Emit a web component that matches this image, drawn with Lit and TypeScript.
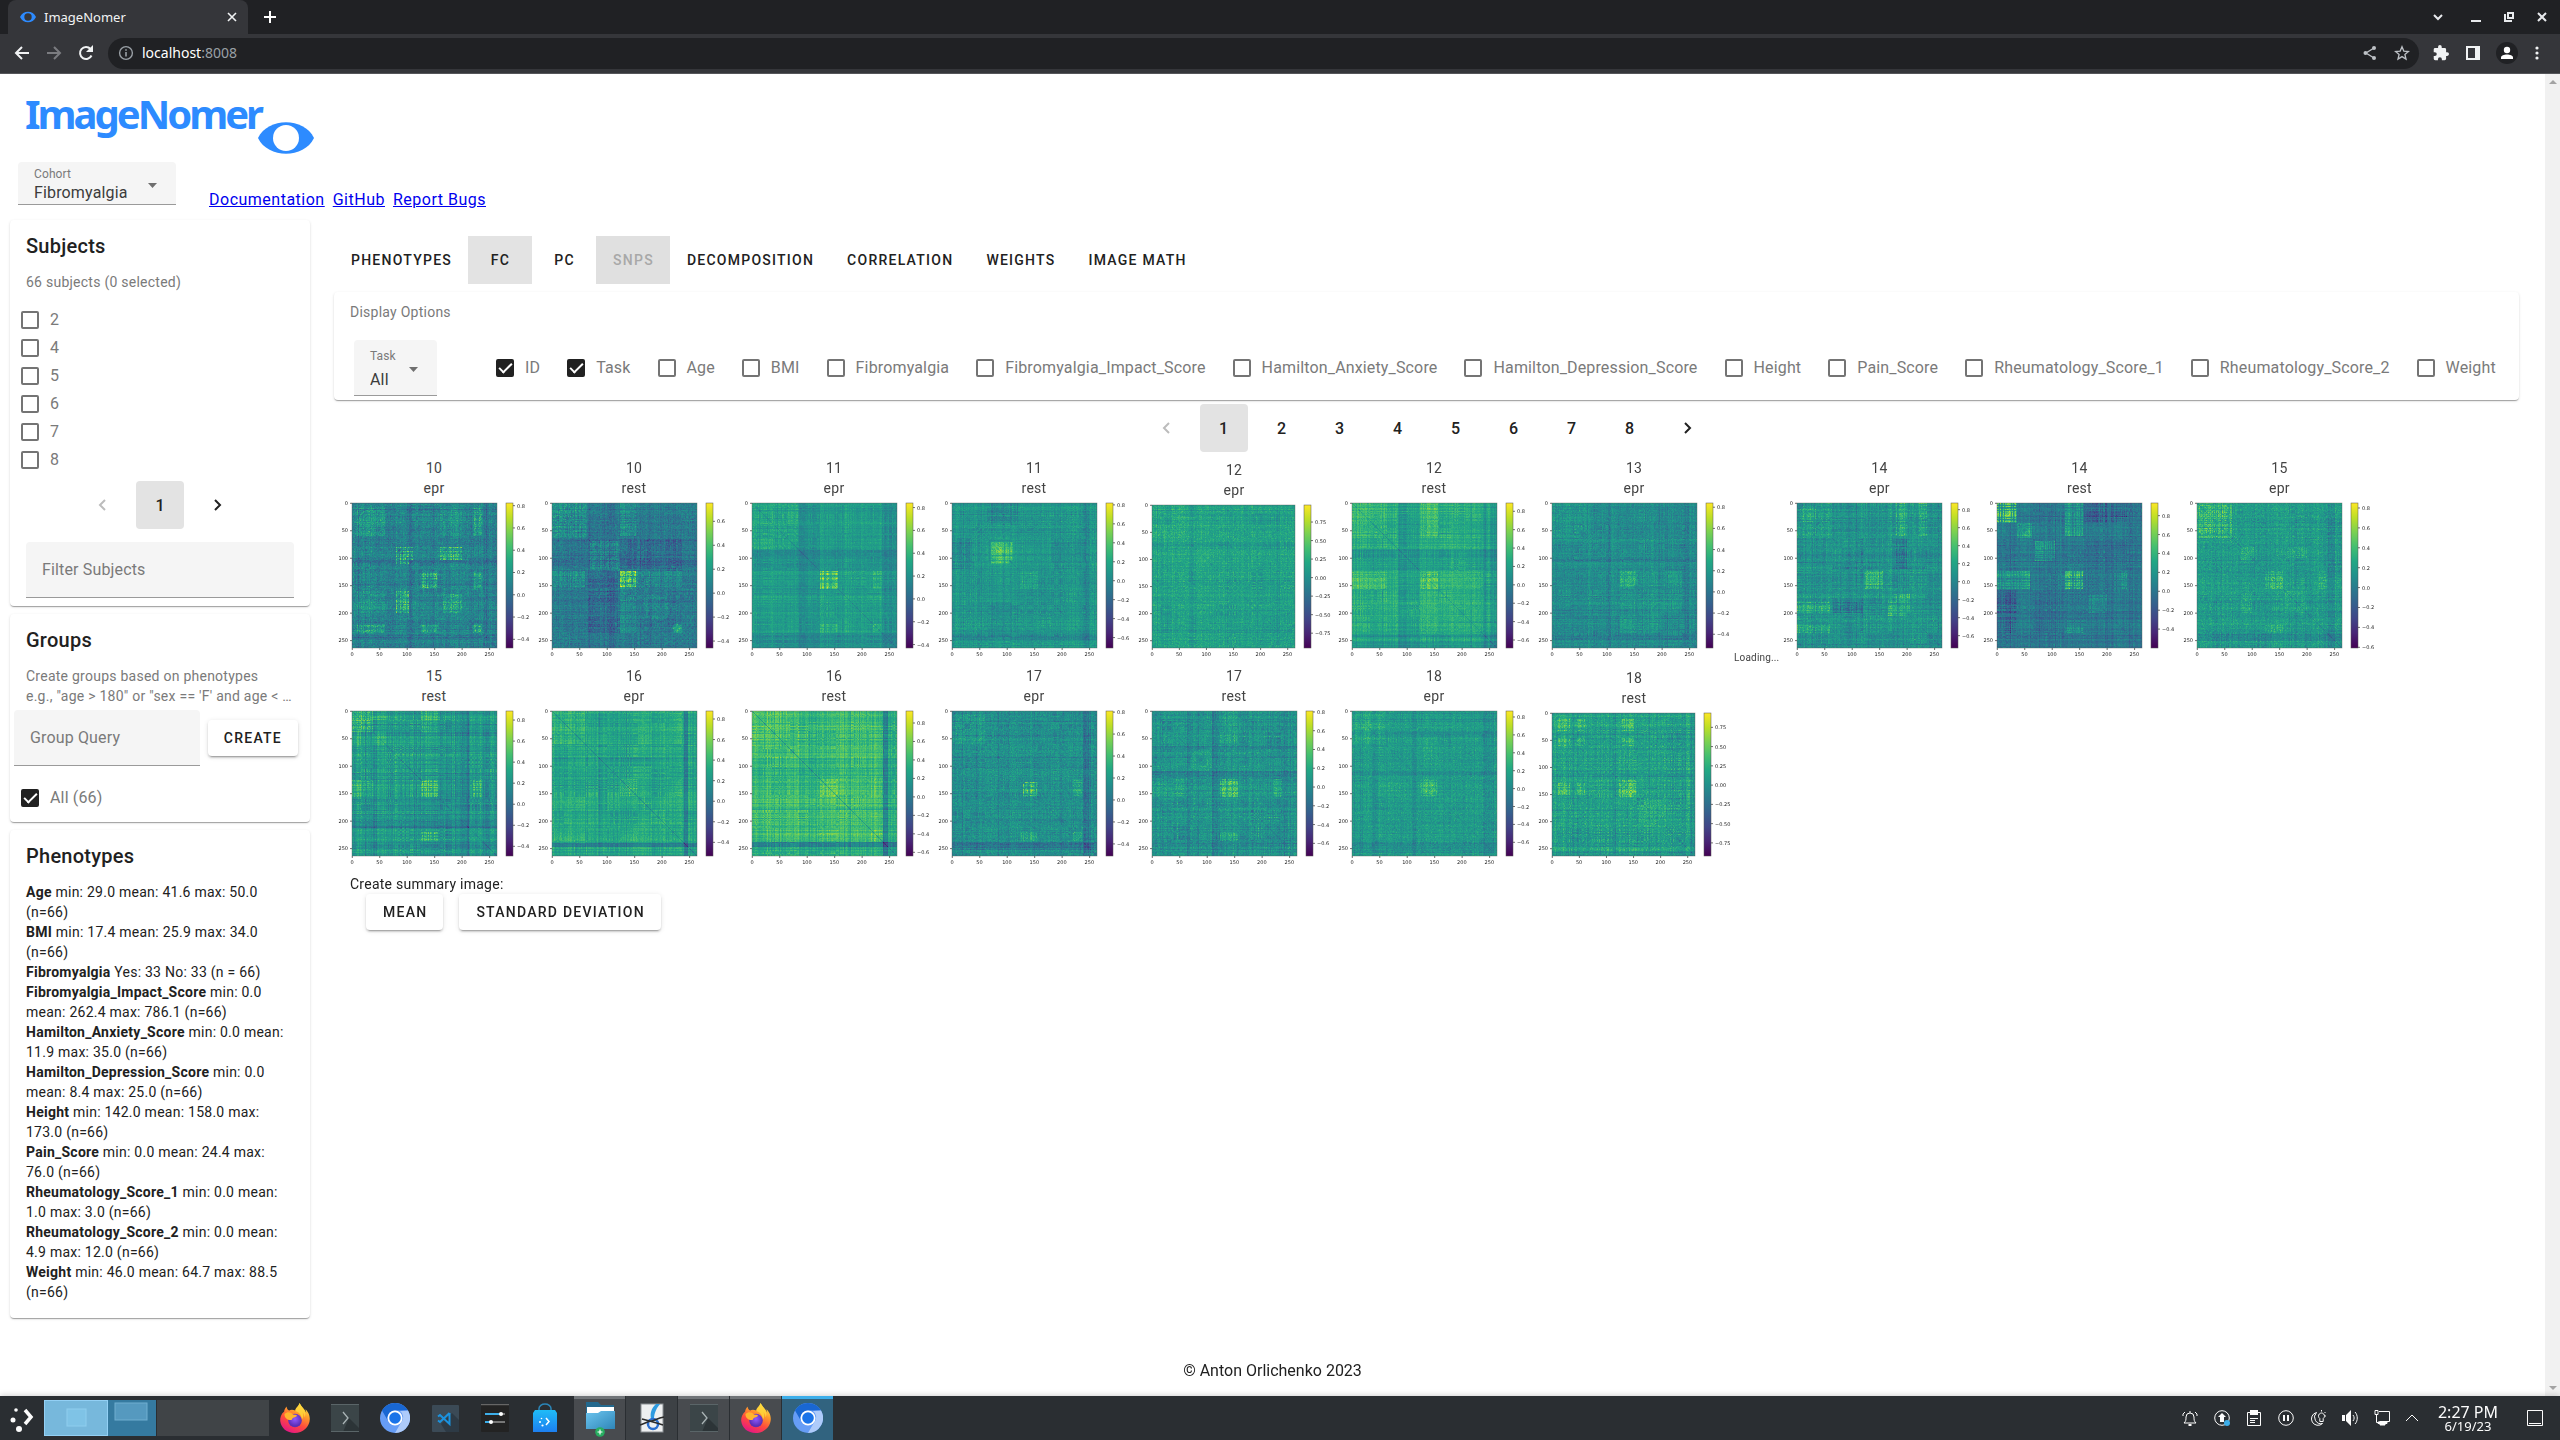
import { LitElement, html, svg, css, nothing } from "lit";
import { customElement, property, query } from "lit/decorators.js";
import { classMap } from "lit/directives/class-map.js";

/* ---------- shared styles ---------- */

const base = css`
  :host {
    display: block;
    box-sizing: border-box;
  }
  *,
  *::before,
  *::after {
    box-sizing: border-box;
  }
  button,
  input,
  select {
    font: inherit;
    letter-spacing: inherit;
    color: inherit;
    margin: 0;
    padding: 0;
    border: 0;
    background: none;
    appearance: none;
  }
  svg {
    display: block;
    flex: none;
  }
`;

const material = css`
  .card {
    background: #fff;
    border-radius: 4px;
    box-shadow: 0 2px 1px -1px rgba(0, 0, 0, 0.2), 0 1px 1px 0 rgba(0, 0, 0, 0.14),
      0 1px 3px 0 rgba(0, 0, 0, 0.12);
  }
  .title {
    margin: 0;
    padding: 10px 16px;
    font-size: 20px;
    line-height: 32px;
    font-weight: 500;
    letter-spacing: 0.0125em;
  }
  .subtitle {
    margin: 0;
    font-size: 14px;
    line-height: 20px;
    letter-spacing: 0.0178em;
    color: #7a7a7a;
  }
  .check {
    display: flex;
    align-items: center;
    gap: 11px;
    font-size: 16px;
    line-height: 28px;
    letter-spacing: 0.0094em;
    color: #7a7a7a;
    white-space: nowrap;
  }
  .check input {
    flex: none;
    display: grid;
    place-items: center;
    width: 18px;
    height: 18px;
    border: 2px solid #747474;
    border-radius: 2px;
  }
  .check input:checked {
    background: #212121;
    border-color: #212121;
  }
  .check input:checked::after {
    content: "";
    width: 13px;
    height: 7px;
    margin-top: -4px;
    border: solid #fff;
    border-width: 0 0 2px 2px;
    transform: rotate(-45deg);
  }
  .btn {
    height: 36px;
    padding: 0 16px;
    border-radius: 4px;
    background: #fff;
    font-size: 14px;
    font-weight: 500;
    letter-spacing: 0.0893em;
    color: #212121;
    box-shadow: 0 3px 1px -2px rgba(0, 0, 0, 0.2), 0 2px 2px 0 rgba(0, 0, 0, 0.14),
      0 1px 5px 0 rgba(0, 0, 0, 0.12);
  }
  .field {
    flex: none;
    display: grid;
    grid-template-columns: 1fr auto;
    padding: 8px 19px 0 16px;
    background: #f5f5f5;
    border-bottom: 1px solid #9a9a9a;
    border-radius: 4px 4px 0 0;
    height: 56px;
    width: 83px;
  }
  .field .cap {
    font-size: 12px;
    line-height: 16px;
    letter-spacing: 0.0094em;
    color: #7a7a7a;
  }
  .field select {
    grid-row: 2;
    font-size: 16px;
    height: 26px;
    line-height: 26px;
    letter-spacing: 0.0094em;
    color: #3c3c3c;
  }
  .field svg {
    grid-area: 1 / 2 / 3 / 3;
    align-self: center;
    margin-bottom: 4px;
  }
  .field.compact {
    padding-top: 4px;
    height: 43px;
    width: 158px;
  }
  .field.compact select {
    height: 20px;
    line-height: 20px;
  }
  .field.compact svg {
    margin-bottom: 0;
  }
  .text {
    display: block;
    height: 56px;
    padding: 0 16px;
    background: #f5f5f5;
    border-bottom: 1px solid #9a9a9a;
    border-radius: 4px 4px 0 0;
    font-size: 16px;
    letter-spacing: 0.0094em;
  }
  .text::placeholder {
    color: #7a7a7a;
    opacity: 1;
  }
`;

const caret = svg`<svg width="9" height="5" viewBox="0 0 9 5"><path d="M0 0h9L4.500 5z" fill="#6f6f6f"/></svg>`;

/* ---------- browser window frame ---------- */

@customElement("browser-bar")
class BrowserBar extends LitElement {
  static styles = [
    base,
    css`
      :host {
        font-family: "Noto Sans", sans-serif;
        color: #fff;
        background: #202124;
      }
      .strip {
        display: flex;
        align-items: center;
        height: 34px;
        padding: 0 10px 0 8px;
      }
      .tab {
        display: flex;
        align-items: center;
        align-self: stretch;
        width: 240px;
        padding: 0 8px 0 12px;
        gap: 8px;
        border-radius: 8px 8px 0 0;
        background: #35363a;
        font-size: 13px;
        color: #f1f3f4;
      }
      .name {
        flex: 1;
      }
      .icon {
        display: grid;
        place-items: center;
        width: 16px;
        height: 16px;
      }
      .add {
        margin-left: 14px;
      }
      .window {
        display: flex;
        margin-left: auto;
        gap: 17px;
      }
      .first {
        margin-right: 5px;
      }
      .tools {
        display: flex;
        align-items: center;
        height: 40px;
        padding: 0 14px 1px 13px;
        background: #35363a;
        border-bottom: 1px solid #55565a;
      }
      .nav {
        display: flex;
        gap: 14px;
        margin-right: 13px;
      }
      .nav .icon,
      .right .icon {
        width: 18px;
        height: 22px;
      }
      .address {
        flex: 1;
        display: flex;
        align-items: center;
        height: 31px;
        padding: 0 9px 0 10px;
        border-radius: 16px;
        background: #202124;
        gap: 8px;
      }
      .url {
        flex: 1;
        font-size: 14px;
        line-height: 20px;
        color: #fff;
      }
      .port {
        color: #9aa0a6;
      }
      .address .icon {
        width: 16px;
      }
      .star {
        margin-left: 8px;
      }
      .right {
        display: flex;
        gap: 14px;
        margin-left: 13px;
      }
    `,
  ];
  render() {
    return html`
      <div class="strip">
        <div class="tab">
          <svg width="16" height="16" viewBox="0 0 56 56">
            <path d="M0 28C10 3 46 3 56 28C46 53 10 53 0 28z" fill="#2d8bff" />
            <circle cx="28" cy="28" r="13" fill="#35363a" />
          </svg>
          <span class="name">ImageNomer</span>
          <button class="icon" aria-label="Close tab">
            <svg width="10" height="10"><path d="M1 1l8 8M9 1l-8 8" stroke="#f1f3f4" stroke-width="1.600" /></svg>
          </button>
        </div>
        <button class="icon add" aria-label="New tab">
          <svg width="12" height="12"><path d="M6 0v12M0 6h12" stroke="#fff" stroke-width="2" /></svg>
        </button>
        <div class="window">
          <button class="icon first" aria-label="Search tabs">
            <svg width="10" height="7"><path d="M1 1l4 4 4-4" fill="none" stroke="#e8eaed" stroke-width="2" /></svg>
          </button>
          <button class="icon" aria-label="Minimize">
            <svg width="10" height="10"><path d="M0 9h10" stroke="#e8eaed" stroke-width="2" /></svg>
          </button>
          <button class="icon" aria-label="Restore">
            <svg width="10" height="10">
              <path d="M4 1h5v5h-5zM1 2v7h7" fill="none" stroke="#e8eaed" stroke-width="2" />
            </svg>
          </button>
          <button class="icon" aria-label="Close window">
            <svg width="10" height="10"><path d="M1 1l8 8M9 1l-8 8" stroke="#e8eaed" stroke-width="2" /></svg>
          </button>
        </div>
      </div>
      <div class="tools">
        <div class="nav">
          <button class="icon" aria-label="Back">
            <svg width="16" height="14"><path d="M15 7H2M8 1L2 7l6 6" fill="none" stroke="#f1f3f4" stroke-width="2" /></svg>
          </button>
          <button class="icon" aria-label="Forward">
            <svg width="16" height="14"><path d="M1 7h13M8 1l6 6-6 6" fill="none" stroke="#7b7c80" stroke-width="2" /></svg>
          </button>
          <button class="icon" aria-label="Reload">
            <svg width="16" height="16">
              <path d="M13.500 10.500A6 6 0 1 1 12.500 4" fill="none" stroke="#f1f3f4" stroke-width="2" />
              <path d="M15 0v7H8z" fill="#f1f3f4" />
            </svg>
          </button>
        </div>
        <div class="address">
          <svg width="16" height="16">
            <circle cx="8" cy="8" r="6.400" fill="none" stroke="#9aa0a6" stroke-width="1.400" />
            <path d="M8 7v4.500M8 4.300v1.500" stroke="#9aa0a6" stroke-width="1.600" />
          </svg>
          <span class="url">localhost<span class="port">:8008</span></span>
          <button class="icon" aria-label="Share">
            <svg width="14" height="14">
              <path d="M11 2L3 7l8 5" fill="none" stroke="#bdc1c6" stroke-width="1.400" />
              <circle cx="11" cy="2" r="2" fill="#bdc1c6" /><circle cx="2.500" cy="7" r="2" fill="#bdc1c6" /><circle cx="11" cy="12" r="2" fill="#bdc1c6" />
            </svg>
          </button>
          <button class="icon star" aria-label="Bookmark">
            <svg width="16" height="16">
              <path d="M8 1.800l1.800 4.300 4.600.400-3.500 3 1.100 4.600L8 11.600 4 14.100l1.100-4.600-3.500-3 4.600-.400z" fill="none" stroke="#bdc1c6" stroke-width="1.300" />
            </svg>
          </button>
        </div>
        <div class="right">
          <button class="icon" aria-label="Extensions">
            <svg width="16" height="16" viewBox="1 1 22 22">
              <path fill="#f1f3f4" d="M20.500 11H19V7a2 2 0 0 0-2-2h-4V3.500a2.500 2.500 0 0 0-5 0V5H4a2 2 0 0 0-2 2v3.800h1.500a2.700 2.700 0 0 1 0 5.400H2V20a2 2 0 0 0 2 2h3.800v-1.500a2.700 2.700 0 0 1 5.400 0V22H17a2 2 0 0 0 2-2v-4h1.500a2.500 2.500 0 0 0 0-5z" />
            </svg>
          </button>
          <button class="icon" aria-label="Side panel">
            <svg width="14" height="14"><path fill="#f1f3f4" fill-rule="evenodd" d="M0 0h14v14H0zM2 2v10h7V2z" /></svg>
          </button>
          <button class="icon" aria-label="Profile">
            <svg width="22" height="22">
              <circle cx="11" cy="11" r="11" fill="#202124" />
              <circle cx="11" cy="8" r="3.200" fill="#fff" /><path d="M5 17v-1.500c0-4 12-4 12 0V17z" fill="#fff" />
            </svg>
          </button>
          <button class="icon" aria-label="Menu">
            <svg width="4" height="14"><circle cx="2" cy="2" r="1.600" fill="#f1f3f4" /><circle cx="2" cy="7" r="1.600" fill="#f1f3f4" /><circle cx="2" cy="12" r="1.600" fill="#f1f3f4" /></svg>
          </button>
        </div>
      </div>
    `;
  }
}

/* ---------- pagination ---------- */

@customElement("page-nav")
class PageNav extends LitElement {
  @property({ type: Number }) pages = 1;
  static styles = [
    base,
    css`
      nav {
        display: flex;
        justify-content: center;
        gap: 10px;
      }
      button {
        display: grid;
        place-items: center;
        width: 48px;
        height: 48px;
        border-radius: 4px;
        font-size: 16px;
        font-weight: 500;
        color: #212121;
      }
      .current {
        background: #e3e3e3;
      }
      button:disabled {
        color: #bcbcbc;
      }
    `,
  ];
  render() {
    const nums = Array.from({ length: this.pages }, (_, i) => i + 1);
    const arrow = (d: string) =>
      html`<svg width="8" height="12"><path d=${d} fill="none" stroke="currentColor" stroke-width="2" /></svg>`;
    return html`<nav aria-label="Pagination">
      <button disabled aria-label="Previous">${arrow("M7 1L2 6l5 5")}</button>
      ${nums.map((n) => html`<button class=${classMap({ current: n === 1 })}>${n}</button>`)}
      <button aria-label="Next">${arrow("M1 1l5 5-5 5")}</button>
    </nav>`;
  }
}

/* ---------- connectivity matrix plot ---------- */

interface Plot {
  id: number;
  task: string;
  min: number;
  max: number;
  step?: number;
  level: number;
  stripe: number;
  noise: number;
  bands?: number[][];
  blocks?: number[][];
  diag?: number;
}

const VIRIDIS = [
  [68, 1, 84], [72, 36, 117], [65, 68, 135], [53, 95, 141], [42, 120, 142], [33, 145, 140],
  [34, 168, 132], [68, 191, 112], [122, 209, 81], [189, 223, 38], [253, 231, 37],
];

function viridis(t: number): number[] {
  const x = Math.max(0, Math.min(0.9999, t)) * 10;
  const k = Math.floor(x);
  return VIRIDIS[k].map((c, n) => c + (VIRIDIS[k + 1][n] - c) * (x - k));
}

function random(seed: number) {
  let a = seed * 7919 + 17;
  return () => {
    a = (a + 0x6d2b79f5) | 0;
    let t = Math.imul(a ^ (a >>> 15), 1 | a);
    t = (t + Math.imul(t ^ (t >>> 7), 61 | t)) ^ t;
    return ((t ^ (t >>> 14)) >>> 0) / 4294967296;
  };
}

const NODES = 264;
const MODULES = [20, 36, 62, 82, 104, 122, 156, 180, 204, 236, 264];

@customElement("fc-plot")
class FcPlot extends LitElement {
  @property({ attribute: false }) plot!: Plot;
  @query("canvas") canvas!: HTMLCanvasElement;

  static styles = [
    base,
    css`
      :host {
        width: 200px;
        font-family: Roboto, sans-serif;
      }
      figure {
        margin: 0;
      }
      figcaption {
        font-size: 14px;
        line-height: 20px;
        letter-spacing: 0.0178em;
        text-align: center;
        color: #444;
      }
      .line {
        display: block;
      }
      .image {
        display: grid;
        justify-items: start;
        align-items: start;
      }
      canvas,
      .axes {
        grid-area: 1 / 1;
      }
      canvas {
        margin: 5px 0 0 18px;
      }
      .axes text {
        font-family: "DejaVu Sans", sans-serif;
        font-size: 5px;
        fill: #222;
      }
    `,
  ];

  get side() {
    return this.plot.step ? 143 : 145;
  }

  firstUpdated() {
    const p = this.plot;
    const n = this.side;
    const rnd = random(p.id * 10 + (p.task === "rest" ? 3 : 1));
    const at = (i: number) => (i / n) * NODES;
    const module = (i: number) => MODULES.findIndex((m) => at(i) < m);

    /* mixing between modules, symmetric */
    const mix = MODULES.map(() => MODULES.map(() => (rnd() - 0.5) * 0.9));
    /* per-node strength: additive stripes (u), plaid (q) and block gain (g) */
    const u: number[] = [];
    const q: number[] = [];
    const g: number[] = [];
    let slow = 0;
    for (let i = 0; i < n; i++) {
      slow = slow * 0.6 + (rnd() - 0.5) * 0.8;
      const spike = rnd() < 0.12 ? -1.3 * rnd() : 0;
      u.push((rnd() - 0.5) * 1.3 + slow + spike);
      q.push(rnd() < 0.3 ? -1.1 * rnd() : 0.3 + rnd() * 0.9);
      g.push(rnd() < 0.25 ? 0.35 : 0.75 + rnd() * 0.4);
    }
    const band = u.map((_, i) =>
      (p.bands ?? []).reduce((s, [a, b, d]) => s + (at(i) >= a && at(i) < b ? d : 0), 0)
    );
    const ctx = this.canvas.getContext("2d")!;
    const img = ctx.createImageData(n, n);
    for (let i = 0; i < n; i++) {
      for (let j = i; j < n; j++) {
        const x = at(j);
        const y = at(i);
        let v = p.level + p.stripe * (u[i] + u[j]) * 0.55 + band[i] + band[j];
        v += p.stripe * mix[module(i)][module(j)] * q[i] * q[j] * 1.8;
        let inside = 0;
        for (const [a, b, c, d, k] of p.blocks ?? []) {
          if ((x >= a && x < b && y >= c && y < d) || (y >= a && y < b && x >= c && x < d)) {
            v += k * g[i] * g[j];
            inside = Math.max(inside, Math.abs(k));
          }
        }
        v += (rnd() + rnd() - 1) * p.noise * (1.3 + 3 * inside);
        if (i === j) v -= p.diag ?? 0.05;
        const [r, gr, b] = viridis(v);
        for (const o of [(i * n + j) * 4, (j * n + i) * 4]) {
          img.data[o] = r;
          img.data[o + 1] = gr;
          img.data[o + 2] = b;
          img.data[o + 3] = 255;
        }
      }
    }
    ctx.putImageData(img, 0, 0);
  }

  render() {
    const p = this.plot;
    const n = this.side;
    const step = p.step ?? 0.2;
    const digits = p.step ? 2 : 1;
    const top = 5;
    const left = 18;
    const bar = left + n + 9;
    const height = n + 23;
    const ticks = [0, 50, 100, 150, 200, 250];
    const values: number[] = [];
    for (let k = Math.ceil(p.min / step); k * step <= p.max; k++) values.push(k * step);
    const label = (v: number) => (v < -0.01 ? "\u2212" : "") + Math.abs(v).toFixed(digits);
    return html`<figure>
      <figcaption><span class="line">${p.id}</span><span class="line">${p.task}</span></figcaption>
      <div class="image">
        <canvas width=${n} height=${n}></canvas>
        <svg class="axes" width="200" height=${height}>
          <defs>
            <linearGradient id="scale" x1="0" y1="1" x2="0" y2="0">
              ${VIRIDIS.map((c, i) => svg`<stop offset=${i / 10} stop-color="rgb(${c.join(",")})"/>`)}
            </linearGradient>
          </defs>
          <rect x=${left} y=${top} width=${n} height=${n} fill="none" stroke="#555" stroke-opacity=".6" stroke-width=".6" />
          <rect x=${bar} y=${top} width="7" height=${n} fill="url(#scale)" stroke="#555" stroke-width=".5" />
          ${ticks.map((t) => {
            const d = (t / NODES) * n;
            return svg`
              <path d="M${left + d + 0.3} ${top + n}v2M${left - 2} ${top + d + 0.3}h2" stroke="#333" stroke-width=".7"/>
              <text x=${left + d} y=${top + n + 8} text-anchor="middle">${t}</text>
              <text x=${left - 4} y=${top + d + 2} text-anchor="end">${t}</text>`;
          })}
          ${values.map((v) => {
            const y = top + ((p.max - v) / (p.max - p.min)) * n;
            return svg`
              <path d="M${bar + 7} ${y}h2" stroke="#333" stroke-width=".7"/>
              <text x=${bar + 11} y=${y + 2}>${label(v)}</text>`;
          })}
        </svg>
      </div>
    </figure>`;
  }
}

const CORE = [122, 156, 122, 156];

const PLOTS: Plot[] = [
  { id: 10, task: "epr", min: -0.478, max: 0.824, level: 0.45, stripe: 0.08, noise: 0.08,
    bands: [[64, 80, -0.02], [100, 108, -0.04], [238, 246, -0.05]],
    blocks: [[5, 60, 5, 60, 0.12], [...CORE, 0.2], [80, 110, 80, 102, 0.22], [160, 200, 80, 102, 0.22],
      [165, 200, 165, 200, 0.14], [160, 200, 5, 60, 0.07], [220, 236, 5, 60, 0.18], [220, 236, 122, 156, 0.16],
      [220, 236, 220, 236, 0.28]] },
  { id: 10, task: "rest", min: -0.458, max: 0.753, level: 0.41, stripe: 0.08, noise: 0.07,
    bands: [[62, 120, -0.03]],
    blocks: [[0, 62, 0, 62, 0.13], [...CORE, 0.38], [68, 122, 68, 122, 0.12], [122, 156, 0, 60, 0.1],
      [122, 156, 160, 236, 0.09], [64, 120, 120, 236, -0.06], [160, 210, 160, 210, 0.07], [220, 236, 220, 236, 0.2]] },
  { id: 11, task: "epr", min: -0.43, max: 0.84, level: 0.55, stripe: 0.07, noise: 0.04, diag: 0.1,
    bands: [[85, 122, -0.05], [236, 264, -0.05]],
    blocks: [[0, 70, 0, 85, 0.06], [...CORE, 0.22], [220, 236, 122, 156, 0.11], [220, 236, 220, 236, 0.12]] },
  { id: 11, task: "rest", min: -0.71, max: 0.82, level: 0.53, stripe: 0.07, noise: 0.05,
    bands: [[238, 250, -0.05]],
    blocks: [[70, 105, 70, 110, 0.17], [...CORE, 0.07], [62, 120, 0, 40, -0.08], [62, 120, 180, 236, -0.05]] },
  { id: 12, task: "epr", min: -0.95, max: 0.98, step: 0.25, level: 0.57, stripe: 0.07, noise: 0.06,
    bands: [[70, 76, -0.04]], blocks: [[0, 60, 0, 60, 0.04]] },
  { id: 12, task: "rest", min: -0.687, max: 0.89, level: 0.62, stripe: 0.08, noise: 0.04, diag: 0.1,
    bands: [[83, 90, -0.09], [90, 122, -0.05], [238, 245, -0.08], [250, 264, -0.1]],
    blocks: [[0, 62, 0, 62, 0.07], [...CORE, 0.17], [122, 156, 0, 62, 0.12], [122, 156, 160, 236, 0.05]] },
  { id: 13, task: "epr", min: -0.53, max: 0.84, level: 0.48, stripe: 0.07, noise: 0.06,
    bands: [[101, 106, -0.06], [240, 248, -0.05]],
    blocks: [[0, 62, 0, 50, 0.06], [...CORE, 0.14], [160, 236, 122, 200, 0.05]] },
  { id: 14, task: "epr", min: -0.737, max: 0.874, level: 0.52, stripe: 0.08, noise: 0.06,
    bands: [[238, 246, -0.04]],
    blocks: [[5, 36, 5, 36, 0.14], [0, 62, 36, 62, 0.07], [...CORE, 0.16], [165, 172, 0, 236, 0.08],
      [180, 200, 0, 60, 0.16], [180, 200, 64, 120, -0.12], [165, 200, 180, 205, 0.12], [222, 236, 0, 60, 0.12],
      [114, 120, 64, 236, -0.1]] },
  { id: 14, task: "rest", min: -0.6, max: 0.934, level: 0.41, stripe: 0.08, noise: 0.05,
    blocks: [[0, 36, 0, 36, 0.4], [36, 62, 36, 62, 0.14], [...CORE, 0.3], [68, 105, 68, 102, 0.18],
      [122, 156, 0, 60, 0.17], [158, 200, 0, 36, -0.12], [206, 236, 0, 36, -0.1], [64, 120, 158, 236, -0.04],
      [165, 200, 165, 200, 0.1], [225, 236, 122, 156, 0.14]] },
  { id: 15, task: "epr", min: -0.607, max: 0.85, level: 0.54, stripe: 0.07, noise: 0.07, diag: 0.1,
    bands: [[238, 250, -0.07]],
    blocks: [[0, 62, 0, 62, 0.15], [...CORE, 0.14], [80, 100, 80, 102, 0.1], [165, 200, 80, 100, 0.08],
      [222, 236, 122, 156, 0.12], [160, 200, 160, 200, 0.06]] },
  { id: 15, task: "rest", min: -0.492, max: 0.886, level: 0.55, stripe: 0.11, noise: 0.05, diag: 0.1,
    bands: [[38, 44, -0.08], [206, 212, -0.1], [238, 250, -0.08], [158, 205, -0.03]],
    blocks: [[0, 38, 0, 38, 0.14], [...CORE, 0.24], [122, 156, 0, 40, 0.1], [220, 236, 122, 156, 0.16]] },
  { id: 16, task: "epr", min: -0.533, max: 0.878, level: 0.6, stripe: 0.08, noise: 0.04, diag: 0.14,
    bands: [[240, 246, -0.16], [84, 120, -0.04]],
    blocks: [[0, 60, 0, 60, 0.06], [...CORE, 0.1], [218, 238, 0, 60, 0.05], [218, 238, 122, 156, 0.06]] },
  { id: 16, task: "rest", min: -0.64, max: 0.93, level: 0.69, stripe: 0.1, noise: 0.04, diag: 0.16,
    bands: [[238, 246, -0.24], [84, 118, -0.05], [246, 264, -0.06]],
    blocks: [[0, 62, 0, 62, 0.05], [...CORE, 0.1], [215, 236, 215, 236, 0.08], [215, 236, 120, 156, 0.06]] },
  { id: 17, task: "epr", min: -0.51, max: 0.81, level: 0.5, stripe: 0.07, noise: 0.07,
    bands: [[238, 248, -0.11]],
    blocks: [[5, 60, 5, 60, 0.07], [128, 156, 132, 156, 0.26], [220, 236, 122, 156, 0.14], [220, 236, 220, 236, 0.12]] },
  { id: 17, task: "rest", min: -0.735, max: 0.81, level: 0.53, stripe: 0.08, noise: 0.07,
    bands: [[62, 68, -0.06], [108, 120, -0.06], [240, 246, -0.06]],
    blocks: [[70, 106, 70, 106, 0.05], [...CORE, 0.22], [220, 236, 122, 156, 0.1], [0, 60, 122, 156, 0.05]] },
  { id: 18, task: "epr", min: -0.753, max: 0.867, level: 0.55, stripe: 0.06, noise: 0.06,
    bands: [[36, 46, -0.04], [108, 118, -0.04], [238, 258, -0.05]],
    blocks: [[0, 60, 0, 60, 0.07], [...CORE, 0.16], [122, 156, 46, 100, 0.04]] },
  { id: 18, task: "rest", min: -0.92, max: 0.936, step: 0.25, level: 0.57, stripe: 0.09, noise: 0.07,
    bands: [[36, 42, -0.05], [112, 118, -0.04], [240, 246, -0.06]],
    blocks: [[8, 32, 8, 32, 0.16], [46, 60, 8, 32, 0.15], [46, 60, 46, 60, 0.15], [...CORE, 0.17],
      [126, 150, 8, 32, 0.15], [126, 150, 46, 60, 0.13], [212, 240, 8, 160, -0.03], [160, 210, 160, 210, 0.06]] },
];

/* ---------- left column ---------- */

const PHENOTYPES: [string, string][] = [
  ["Age", "min: 29.0 mean: 41.6 max: 50.0 (n=66)"],
  ["BMI", "min: 17.4 mean: 25.9 max: 34.0 (n=66)"],
  ["Fibromyalgia", "Yes: 33 No: 33 (n = 66)"],
  ["Fibromyalgia_Impact_Score", "min: 0.0 mean: 262.4 max: 786.1 (n=66)"],
  ["Hamilton_Anxiety_Score", "min: 0.0 mean: 11.9 max: 35.0 (n=66)"],
  ["Hamilton_Depression_Score", "min: 0.0 mean: 8.4 max: 25.0 (n=66)"],
  ["Height", "min: 142.0 mean: 158.0 max: 173.0 (n=66)"],
  ["Pain_Score", "min: 0.0 mean: 24.4 max: 76.0 (n=66)"],
  ["Rheumatology_Score_1", "min: 0.0 mean: 1.0 max: 3.0 (n=66)"],
  ["Rheumatology_Score_2", "min: 0.0 mean: 4.9 max: 12.0 (n=66)"],
  ["Weight", "min: 46.0 mean: 64.7 max: 88.5 (n=66)"],
];

@customElement("side-panel")
class SidePanel extends LitElement {
  static styles = [
    base,
    material,
    css`
      :host {
        display: flex;
        flex-direction: column;
        gap: 8px;
      }
      .subjects {
        padding-bottom: 8px;
      }
      .subjects .subtitle {
        padding: 0 16px 14px;
      }
      .list {
        padding: 0 11px 7px;
      }
      .subjects .text {
        width: 268px;
        margin: 13px 16px 0;
      }
      .groups .subtitle {
        margin: 0 16px;
        height: 40px;
        overflow: hidden;
        white-space: nowrap;
      }
      .ellipsis {
        display: block;
        overflow: hidden;
        text-overflow: ellipsis;
      }
      .query {
        display: flex;
        align-items: center;
        gap: 8px;
        padding: 4px 12px 0 4px;
      }
      .query .text {
        flex: 1;
        min-width: 0;
      }
      .groups .check {
        padding: 18px 11px 10px;
      }
      .stats {
        padding: 0 16px 16px;
        font-size: 14px;
        line-height: 20px;
        letter-spacing: 0.0178em;
      }
      .stats p {
        margin: 0;
      }
      .stats b {
        font-weight: 700;
      }
    `,
  ];
  render() {
    return html`
      <section class="card subjects">
        <h2 class="title">Subjects</h2>
        <p class="subtitle">66 subjects (0 selected)</p>
        <div class="list">
          ${[2, 4, 5, 6, 7, 8].map((n) => html`<label class="check"><input type="checkbox" />${n}</label>`)}
        </div>
        <page-nav .pages=${1}></page-nav>
        <input class="text" type="text" placeholder="Filter Subjects" aria-label="Filter Subjects" />
      </section>
      <section class="card groups">
        <h2 class="title">Groups</h2>
        <p class="subtitle">
          Create groups based on phenotypes
          <span class="ellipsis">e.g., "age &gt; 180" or "sex == 'F' and age &lt; 200"</span>
        </p>
        <div class="query">
          <input class="text" type="text" placeholder="Group Query" aria-label="Group Query" />
          <button class="btn">CREATE</button>
        </div>
        <label class="check"><input type="checkbox" checked />All (66)</label>
      </section>
      <section class="card">
        <h2 class="title">Phenotypes</h2>
        <div class="stats">${PHENOTYPES.map(([k, v]) => html`<p><b>${k}</b> ${v}</p>`)}</div>
      </section>
    `;
  }
}

/* ---------- connectivity view ---------- */

const TABS = ["PHENOTYPES", "FC", "PC", "SNPS", "DECOMPOSITION", "CORRELATION", "WEIGHTS", "IMAGE MATH"];
const OPTIONS = [
  "ID", "Task", "Age", "BMI", "Fibromyalgia", "Fibromyalgia_Impact_Score", "Hamilton_Anxiety_Score",
  "Hamilton_Depression_Score", "Height", "Pain_Score", "Rheumatology_Score_1", "Rheumatology_Score_2", "Weight",
];

@customElement("fc-view")
class FcView extends LitElement {
  static styles = [
    base,
    material,
    css`
      :host {
        min-width: 0;
        padding-top: 16px;
      }
      .tabs {
        display: flex;
        margin-bottom: 8px;
      }
      .tab {
        height: 48px;
        min-width: 64px;
        padding: 0 16px 0 17px;
        font-size: 14px;
        font-weight: 500;
        letter-spacing: 0.0893em;
      }
      .tab.on {
        background: #e3e3e3;
      }
      .tab:disabled {
        background: #e0e0e0;
        color: #a8a8a8;
      }
      .options {
        margin-bottom: 4px;
      }
      .options .subtitle {
        padding: 10px 16px;
      }
      .row {
        display: flex;
        align-items: center;
        padding: 8px 20px 4px;
      }
      .checks {
        display: flex;
        gap: 27px;
        margin-left: 59px;
      }
      .plots {
        display: flex;
        flex-wrap: wrap;
        align-items: flex-end;
        padding-top: 6px;
      }
      .loading {
        font-size: 10px;
        line-height: 16px;
        letter-spacing: 0.0178em;
        color: #444;
      }
      .summary {
        margin: 0;
        padding: 0 16px;
        font-size: 14px;
        line-height: 20px;
        letter-spacing: 0.0178em;
      }
      .actions {
        display: flex;
        gap: 16px;
        padding-left: 32px;
      }
      .actions .btn {
        padding: 0 16px 0 17px;
      }
    `,
  ];
  render() {
    return html`
      <nav class="tabs">
        ${TABS.map((t) => html`<button class=${classMap({ tab: true, on: t === "FC" })} ?disabled=${t === "SNPS"}>${t}</button>`)}
      </nav>
      <section class="card options">
        <p class="subtitle">Display Options</p>
        <div class="row">
          <label class="field"><span class="cap">Task</span><select><option>All</option></select>${caret}</label>
          <div class="checks">
            ${OPTIONS.map((o, i) => html`<label class="check"><input type="checkbox" ?checked=${i < 2} />${o}</label>`)}
          </div>
        </div>
      </section>
      <page-nav .pages=${8}></page-nav>
      <div class="plots">
        ${PLOTS.map((p, i) => html`${i === 7 ? html`<span class="loading">Loading...</span>` : nothing}<fc-plot .plot=${p}></fc-plot>`)}
      </div>
      <p class="summary">Create summary image:</p>
      <div class="actions">
        <button class="btn">MEAN</button>
        <button class="btn">STANDARD DEVIATION</button>
      </div>
    `;
  }
}

/* ---------- desktop panel ---------- */

const firefox = html`<svg width="32" height="32" viewBox="0 0 32 32">
  <defs>
    <linearGradient id="fx" x1=".8" y1="0" x2=".3" y2="1"><stop offset="0" stop-color="#fff44f" /><stop offset=".35" stop-color="#ff9a2b" /><stop offset=".65" stop-color="#ff4a3d" /><stop offset="1" stop-color="#e31587" /></linearGradient>
    <radialGradient id="fv" cx=".5" cy=".4"><stop offset="0" stop-color="#9059ff" /><stop offset="1" stop-color="#5b2fb5" /></radialGradient>
  </defs>
  <path fill="url(#fx)" d="M20.500 1c-.8 3.500-4 4.600-4.200 7.500-3-1.200-5-.7-6 0C8.600 8 7.600 6.200 7.700 4.500 5.600 6.500 5.200 8.500 5.200 9.500 2 12 1 16 1.200 19c.8 7 6.500 12 14.500 12s15-6 15.100-14c0-4.500-2.300-8-4.500-9.700.6 1.300.9 2.600.9 3.400C26 7 22.500 5 20.500 1z" />
  <circle cx="16" cy="18.500" r="6.800" fill="url(#fv)" />
  <path fill="#ffb52e" d="M5.500 12c3-2.500 6-2 8.500.5 1.500.2 3 .2 4 1-.5 1.600-2.500 1.900-3.800 2.300-1 .5-.8 1.500-1.800 2.200-3 .6-7-1.500-6.900-6z" />
  <path fill="#ffd83b" d="M20.500 1c-.8 3.500-4 4.600-4 8 3 1 6 3.500 6.500 8.500 1.500-2 1.500-5 .5-7.500 1 1 2 3.500 2 5.500 3-5-2-9-5-14.500z" opacity=".8" />
</svg>`;

const konsole = html`<svg width="28" height="28" viewBox="0 0 28 28">
  <rect width="28" height="28" rx="1" fill="#3b4548" /><path d="M18 14l10 10v4H12z" fill="#2c3437" />
  <path d="M0 .5h28M0 27.500h28" stroke="#5a6568" /><path d="M12 8l5 6-5 6" fill="none" stroke="#a9b3b5" stroke-width="1.300" />
</svg>`;

const chromium = html`<svg width="30" height="30" viewBox="0 0 30 30">
  <circle cx="15" cy="15" r="15" fill="#669df6" /><path d="M15 0a15 15 0 0 1 13 7.500H15a7.500 7.500 0 0 0-6.500 11.300L2 7.500A15 15 0 0 1 15 0z" fill="#1967d2" />
  <path d="M28 7.500A15 15 0 0 1 15 30l6.500-11.200A7.500 7.500 0 0 0 20 8z" fill="#aecbfa" />
  <circle cx="15" cy="15" r="7.500" fill="#fff" /><circle cx="15" cy="15" r="5.800" fill="#1a73e8" />
</svg>`;

const vscode = html`<svg width="27" height="27" viewBox="0 0 27 27">
  <rect width="27" height="27" rx="1" fill="#3b4a56" /><path d="M20 8l7 7v12H14l-5-8z" fill="#2d3a45" />
  <path d="M17.500 8v11L8 10l-2 1.500M17.500 8L8 17l-2-1.500" fill="none" stroke="#1b93e0" stroke-width="2" />
</svg>`;

const sliders = html`<svg width="28" height="28" viewBox="0 0 28 28">
  <rect width="28" height="28" rx="1" fill="#232323" /><path d="M0 .7h28" stroke="#777" />
  <path d="M20 10h4M10 18h14" stroke="#777" stroke-width="2" /><path d="M4 10h16M4 18h6" stroke="#3daee9" stroke-width="2" />
  <circle cx="20" cy="10" r="2" fill="#fff" /><circle cx="10" cy="18" r="2" fill="#fff" />
</svg>`;

const bag = html`<svg width="24" height="30" viewBox="0 0 24 30">
  <defs><linearGradient id="bag" x1="0" y1="0" x2="0" y2="1"><stop offset="0" stop-color="#1fbcf7" /><stop offset="1" stop-color="#1d7ff0" /></linearGradient></defs>
  <path d="M6 9V5.500a6 4.500 0 0 1 12 0V9" fill="none" stroke="#2b86b8" stroke-width="1.500" />
  <path d="M2 7h20l2 3v19H0V10z" fill="url(#bag)" />
  <path d="M13 15l3 3.500-3 3.500" fill="none" stroke="#fff" stroke-width="1.500" />
  <circle cx="7" cy="19" r="1" fill="#fff" /><circle cx="8.500" cy="15.500" r=".8" fill="#fff" /><circle cx="9.500" cy="22.500" r="1.100" fill="#fff" />
</svg>`;

const folder = html`<svg width="30" height="38" viewBox="0 0 30 38">
  <defs><linearGradient id="fold" x1="0" y1="0" x2="1" y2="1"><stop offset="0" stop-color="#6cc5ef" /><stop offset="1" stop-color="#2f86b8" /></linearGradient></defs>
  <path d="M1 3h12l3 3h13v8H1z" fill="#23698e" /><path d="M2 8h27v6H2z" fill="#fff" />
  <path d="M1 14h12l3-2h14v18H1z" fill="url(#fold)" />
  <circle cx="15" cy="33" r="4.800" fill="#27ae60" /><path d="M15 30.500v5M12.500 33h5" stroke="#fff" stroke-width="1.200" />
</svg>`;

const editor = html`<svg width="26" height="30" viewBox="0 0 26 30">
  <rect x="2" y="1" width="22" height="28" fill="#eef0f1" stroke="#8a8f93" /><path d="M17 1c-5 5-6 9-5 15l3 1c0-5 1-10 6-16z" fill="#2e9be0" />
  <circle cx="14" cy="21" r="5" fill="none" stroke="#2a6fd0" stroke-width="2.500" /><path d="M1 22c4-1 8-4 11-4s6-3 13-4M3 16c7 2 12 3 21 6" fill="none" stroke="#2b2b2b" stroke-width="1.600" />
</svg>`;

@customElement("task-bar")
class TaskBar extends LitElement {
  static styles = [
    base,
    css`
      :host {
        display: flex;
        align-items: center;
        height: 44px;
        background: #2a2e32;
        color: #fcfcfc;
        font-family: "Noto Sans", sans-serif;
        box-shadow: 0 -1px 6px rgba(0, 0, 0, 0.18);
      }
      button {
        display: grid;
        place-items: center;
        height: 44px;
        padding: 0;
      }
      .start {
        width: 44px;
      }
      .pager {
        display: flex;
        height: 36px;
      }
      .desk {
        display: block;
        height: 36px;
      }
      .d1 {
        width: 64px;
        background: #77b8dc;
        border: 1px solid #93d0f5;
      }
      .d2 {
        width: 48px;
        background: #357aa0;
      }
      .d3 {
        width: 112px;
        margin-left: 1px;
        background: #404447;
      }
      .launch {
        display: flex;
        padding: 0 4px 0 1px;
      }
      .launch button {
        width: 50px;
      }
      .tasks {
        display: flex;
        gap: 1px;
      }
      .tasks button {
        width: 51px;
        padding-bottom: 3px;
        background: #484b4f;
        border-top: 3px solid #707478;
      }
      .tasks .plain {
        background: #3d4145;
        border-top-color: #3d4145;
      }
      .tasks .active {
        background: #31637f;
        border-top-color: #3daee9;
      }
      .tray {
        display: flex;
        align-items: center;
        margin-left: auto;
      }
      .tray button {
        width: 32px;
      }
      .tray .more {
        width: 28px;
      }
      .clock {
        width: 84px;
        text-align: center;
      }
      .time {
        display: block;
        font-size: 16px;
        line-height: 16px;
      }
      .date {
        display: block;
        font-size: 13px;
        line-height: 12px;
      }
      .tray .show {
        width: 50px;
      }
    `,
  ];
  render() {
    const launch: [string, unknown][] = [
      ["Firefox", firefox], ["Konsole", konsole], ["Chromium", chromium],
      ["Code", vscode], ["Settings", sliders], ["Discover", bag],
    ];
    const tray: [string, unknown][] = [
      ["Notifications", svg`<path d="M2 13c2-2 2-3 2-6a4 4 0 0 1 8 0c0 3 0 4 2 6zM8 3V1M1 6V4l2-2M15 6V4l-2-2"/><path d="M6.500 15h3" stroke-width="2"/>`],
      ["Updates", svg`<circle cx="8" cy="8" r="7.300"/><path d="M8 3l4 4h-2v5H6V7H4z" fill="#fcfcfc" stroke="none"/><circle cx="13" cy="13" r="3" fill="#3daee9" stroke="none"/>`],
      ["Clipboard", svg`<path d="M1.500 2.500h13v13h-13zM4 8.500h8M4 10.500h5M4 12.500h5"/><path d="M4 0h8v5H4z" fill="#fcfcfc" stroke="none"/>`],
      ["Media", svg`<circle cx="8" cy="8" r="7.300"/><path d="M6 5v6M10 5v6" stroke-width="2"/>`],
      ["Night light", svg`<path d="M6.500 2.500a6.500 6.500 0 1 0 6 11a6.500 6.500 0 0 1-6-11z"/><path d="M9.800 8.500a3 3 0 1 1 3.400 0v3h-3.400zM11.500 0v1.500M15.500 2l-1 1M16 6h-1"/>`],
      ["Volume", svg`<path d="M0 5h3v6H0zM4 5l5-5v16l-5-5z" fill="#fcfcfc" stroke="none"/><path d="M11 5c1.500 2 1.500 4 0 6M13 2c3 3 3 9 0 12"/>`],
      ["Network", svg`<path d="M5 1.500h10.500v10H5.500M2.500 5v7.500h3M1 .5h3v4H1z"/><path d="M4 12h9v1.500h-2V15H6v-1.500H4z" fill="#fcfcfc"/>`],
    ];
    return html`
      <button class="start" aria-label="Application launcher">
        <svg width="24" height="28" viewBox="0 0 24 28"><path d="M15 6l6 7-6 7" fill="none" stroke="#fcfcfc" stroke-width="3.500" /><circle cx="6" cy="6" r="1.800" fill="#fcfcfc" /><circle cx="3" cy="16" r="2.500" fill="#fcfcfc" /><circle cx="9" cy="25" r="3" fill="#fcfcfc" /></svg>
      </button>
      <div class="pager">
        <button class="desk d1" aria-label="Desktop 1"><svg width="62" height="34"><rect x="22" y="8" width="19" height="17" fill="#7fc3e6" stroke="#8fcdee" /></svg></button>
        <button class="desk d2" aria-label="Desktop 2"><svg width="48" height="36"><rect x="7" y="3" width="32" height="17" fill="#5599bf" stroke="#70aed0" /></svg></button>
        <button class="desk d3" aria-label="Desktop 3"></button>
      </div>
      <div class="launch">${launch.map(([n, i]) => html`<button aria-label=${n}>${i}</button>`)}</div>
      <div class="tasks">
        <button aria-label="Files">${folder}</button>
        <button class="plain" aria-label="Editor">${editor}</button>
        <button aria-label="Terminal">${konsole}</button>
        <button aria-label="Firefox window">${firefox}</button>
        <button class="active" aria-label="Chromium window">${chromium}</button>
      </div>
      <div class="tray">
        ${tray.map(([n, i]) => html`<button aria-label=${n}><svg width="16" height="16" fill="none" stroke="#fcfcfc">${i}</svg></button>`)}
        <button class="more" aria-label="Show hidden icons"><svg width="14" height="8"><path d="M1 7l6-6 6 6" fill="none" stroke="#fcfcfc" /></svg></button>
        <div class="clock"><span class="time">2:27 PM</span><span class="date">6/19/23</span></div>
        <button class="show" aria-label="Show desktop"><svg width="16" height="16"><path d="M.5.5h15v15H.5zM2 13.500h12" fill="none" stroke="#fcfcfc" /></svg></button>
      </div>
    `;
  }
}

/* ---------- page ---------- */

@customElement("app-root")
class AppRoot extends LitElement {
  static styles = [
    base,
    material,
    css`
      :host {
        display: flex;
        flex-direction: column;
        min-height: 100vh;
        font-family: Roboto, sans-serif;
        color: #212121;
        background: #fff;
      }
      .view {
        flex: 1;
        display: flex;
      }
      .page {
        flex: 1;
        min-width: 0;
        display: flex;
        flex-direction: column;
      }
      .scroll {
        display: flex;
        flex-direction: column;
        justify-content: space-between;
        align-items: center;
        width: 15px;
        padding: 6px 0;
        background: #f1f1f1;
      }
      header {
        padding: 12px 18px 0;
      }
      .word {
        font-family: "Noto Sans", sans-serif;
        font-size: 40px;
        font-weight: 700;
        letter-spacing: -3px;
        fill: #2d8bff;
      }
      .bar {
        display: flex;
        align-items: flex-end;
        gap: 33px;
        height: 50px;
      }
      .bar .field {
        align-self: flex-start;
      }
      .links {
        display: flex;
        gap: 8px;
        font-size: 16px;
        line-height: 24px;
        letter-spacing: 0.0313em;
      }
      a {
        color: #0000ee;
        text-decoration: underline;
      }
      .body {
        display: grid;
        grid-template-columns: 300px 1fr;
        gap: 24px;
        padding: 8px 26px 0 10px;
      }
      footer {
        margin-top: auto;
        padding-bottom: 13px;
        text-align: center;
        font-size: 16px;
        line-height: 24px;
      }
    `,
  ];
  render() {
    return html`
      <browser-bar></browser-bar>
      <div class="view">
        <div class="page">
          <header>
            <svg width="300" height="76" role="img" aria-label="ImageNomer">
              <text class="word" x="7" y="43">ImageNomer</text>
              <path d="M240 52C250 31 286 31 296 52C286 73 250 73 240 52z" fill="#2d8bff" />
              <circle cx="268" cy="52" r="13" fill="#fff" />
            </svg>
            <div class="bar">
              <label class="field compact"><span class="cap">Cohort</span><select><option>Fibromyalgia</option></select>${caret}</label>
              <nav class="links">
                <a href="#docs">Documentation</a>
                <a href="#github">GitHub</a>
                <a href="#bugs">Report Bugs</a>
              </nav>
            </div>
          </header>
          <main class="body">
            <side-panel></side-panel>
            <fc-view></fc-view>
          </main>
          <footer>© Anton Orlichenko 2023</footer>
        </div>
        <div class="scroll">
          <svg width="8" height="4"><path d="M4 0l4 4H0z" fill="#a3a3a3" /></svg>
          <svg width="8" height="4"><path d="M0 0h8L4 4z" fill="#a3a3a3" /></svg>
        </div>
      </div>
      <task-bar></task-bar>
    `;
  }
}
